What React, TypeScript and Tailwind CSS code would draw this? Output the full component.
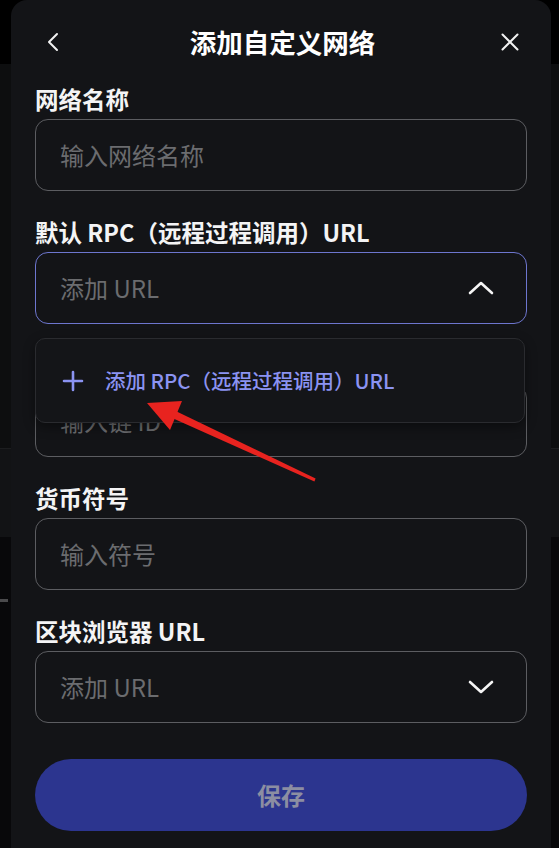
import React from "react";

function ChevronLeft() {
  return (
    <svg width="14" height="20" viewBox="0 0 14 20" fill="none">
      <path d="M11 2 L3 10 L11 18" stroke="#f2f2f2" strokeWidth="2" strokeLinecap="round" strokeLinejoin="round" />
    </svg>
  );
}

function CloseIcon() {
  return (
    <svg width="18" height="18" viewBox="0 0 18 18" fill="none">
      <path d="M1.5 1.5 L16.5 16.5 M16.5 1.5 L1.5 16.5" stroke="#f2f2f2" strokeWidth="2" strokeLinecap="round" />
    </svg>
  );
}

function Chevron({ up }: { up?: boolean }) {
  return (
    <svg width="26" height="16" viewBox="0 0 26 16" fill="none">
      <path
        d={up ? "M2 13 L13 3 L24 13" : "M2 3 L13 13 L24 3"}
        stroke="#f5f5f5"
        strokeWidth="2.6"
        strokeLinecap="round"
        strokeLinejoin="round"
      />
    </svg>
  );
}

function Field({
  label,
  placeholder,
  chevron,
  focused,
}: {
  label: string;
  placeholder: string;
  chevron?: "up" | "down";
  focused?: boolean;
}) {
  return (
    <div className="flex flex-col gap-[3px]">
      <div className="h-[32px] leading-[30px] text-[23.5px] font-bold text-[#f4f4f5]">{label}</div>
      <div
        className={
          "flex h-[72px] items-center justify-between rounded-[13px] border pl-[24px] pr-[32px] " +
          (focused ? "border-[#6d76cf]" : "border-[#5c5d61]")
        }
      >
        <span className="text-[24px] leading-[30px] text-[#6b6c6f]">{placeholder}</span>
        {chevron && <Chevron up={chevron === "up"} />}
      </div>
    </div>
  );
}

export default function App() {
  return (
    <div className="relative h-[848px] w-full overflow-hidden bg-black font-['Noto_Sans_CJK_SC','Noto_Sans',sans-serif]">
      {/* dimmed page behind the sheet */}
      <div className="flex h-full flex-col">
        <div className="h-[64px] bg-black" />
        <div className="h-[384px] bg-[#0d0e0f]" />
        <div className="h-[89px] border-t border-[#1c1d1f] bg-[#121315]" />
        <div className="flex flex-1 flex-col bg-[#08080a]">
          <div className="mt-[62px] h-[3px] w-[8px] bg-[#4a4a4c]" />
        </div>
      </div>

      {/* sheet */}
      <div className="absolute left-[11px] top-0 flex h-[860px] w-[540px] flex-col rounded-t-[16px] bg-[#131417] px-[24px]">
        <div className="flex h-[84px] items-center justify-between">
          <div className="ml-[11px] flex w-[30px] items-center">
            <ChevronLeft />
          </div>
          <div className="text-[26.5px] font-bold text-white">添加自定义网络</div>
          <div className="mr-[8px] flex w-[30px] items-center justify-end">
            <CloseIcon />
          </div>
        </div>

        <div className="flex flex-col gap-[26px]">
          <Field label="网络名称" placeholder="输入网络名称" />
          <div className="relative">
            <Field label="默认 RPC（远程过程调用）URL" placeholder="添加 URL" chevron="up" focused />
            {/* popover */}
            <div className="absolute left-0 top-[121px] z-10 flex h-[85px] w-[490px] items-center gap-[21px] rounded-[10px] border border-[#2a2b2f] bg-[#141518] pl-[26px] shadow-[0_4px_12px_rgba(0,0,0,0.4)]">
              <svg width="22" height="22" viewBox="0 0 22 22" fill="none">
                <path d="M11 2 V20 M2 11 H20" stroke="#8b93f2" strokeWidth="2.6" strokeLinecap="round" />
              </svg>
              <span className="text-[20.5px] font-medium text-[#8b93f2]">添加 RPC（远程过程调用）URL</span>
            </div>
          </div>
          <Field label="链 ID" placeholder="输入链 ID" />
          <Field label="货币符号" placeholder="输入符号" />
          <Field label="区块浏览器 URL" placeholder="添加 URL" chevron="down" />
        </div>

        <button className="mt-[36px] flex h-[72px] w-full items-center justify-center rounded-full bg-[#2c358f] text-[24px] font-bold text-[#8c8ea2]">
          保存
        </button>
      </div>

      {/* annotation arrow */}
      <svg className="absolute left-0 top-0 z-20" width="559" height="848" viewBox="0 0 559 848">
        <polygon points="315.6,478.6 314.4,481.4 173.3,418.6 176.7,411.4" fill="#e8231f" />
        <polygon points="147,403 182,401 170,430" fill="#e8231f" />
      </svg>
    </div>
  );
}
